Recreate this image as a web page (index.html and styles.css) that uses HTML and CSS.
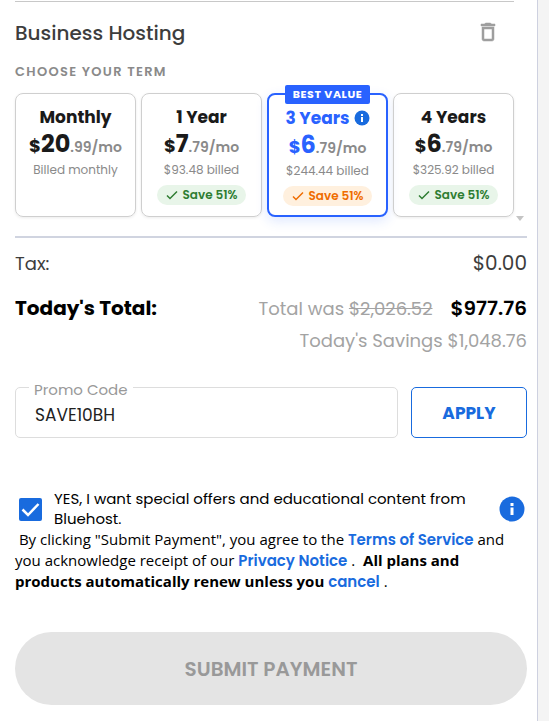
FILE: index.html
```html
<!DOCTYPE html>
<html lang="en">
<head>
    <meta charset="UTF-8">
    <meta name="viewport" content="width=device-width, initial-scale=1.0">
    <title>Checkout</title>
    <link rel="stylesheet" href="styles.css">
</head>
<body>
    <main class="panel">
        <section class="product">
            <div class="product-header">
                <h2>Business Hosting</h2>
                <button type="button" class="remove" aria-label="Remove">
                    <svg width="24" height="24" viewBox="0 0 24 24" fill="#9e9e9e" stroke="#9e9e9e" stroke-width="0.5"><path d="M6 19c0 1.100.9 2 2 2h8c1.100 0 2-.9 2-2V7H6v12zM8 9h8v10H8V9zm7.500-5-1-1h-5l-1 1H5v2h14V4z"/></svg>
                </button>
            </div>
            <fieldset class="terms">
                <legend>CHOOSE YOUR TERM</legend>
                <div class="term-list">
                    <label class="term">
                        <input type="radio" name="term" value="1">
                        <span class="term-name">Monthly</span>
                        <span class="price"><span class="currency">$</span><span class="amount">20</span>.99/mo</span>
                        <span class="billed">Billed monthly</span>
                    </label>
                    <label class="term">
                        <input type="radio" name="term" value="12">
                        <span class="term-name">1 Year</span>
                        <span class="price"><span class="currency">$</span><span class="amount">7</span>.79/mo</span>
                        <span class="billed">$93.48 billed</span>
                        <span class="save"><svg width="12" height="10" viewBox="0 0 12 10"><path d="M1 5.500 4 8.500 11 1.500"/></svg>Save 51%</span>
                    </label>
                    <label class="term selected">
                        <input type="radio" name="term" value="36" checked>
                        <span class="best-value">BEST VALUE</span>
                        <span class="term-name">3 Years
                            <svg width="16" height="16" viewBox="0 0 16 16"><circle cx="8" cy="8" r="7.500" fill="#196bde"/><path d="M7 4h2v2H7zM7 7h2v5H7z" fill="#fff"/></svg>
                        </span>
                        <span class="price"><span class="currency">$</span><span class="amount">6</span>.79/mo</span>
                        <span class="billed">$244.44 billed</span>
                        <span class="save"><svg width="12" height="10" viewBox="0 0 12 10"><path d="M1 5.500 4 8.500 11 1.500"/></svg>Save 51%</span>
                    </label>
                    <label class="term">
                        <input type="radio" name="term" value="48">
                        <span class="term-name">4 Years</span>
                        <span class="price"><span class="currency">$</span><span class="amount">6</span>.79/mo</span>
                        <span class="billed">$325.92 billed</span>
                        <span class="save"><svg width="12" height="10" viewBox="0 0 12 10"><path d="M1 5.500 4 8.500 11 1.500"/></svg>Save 51%</span>
                    </label>
                </div>
            </fieldset>
            <span class="scroll-arrow"></span>
        </section>

        <section class="totals">
            <div class="row tax"><span>Tax:</span><span>$0.00</span></div>
            <div class="row total">
                <strong>Today's Total:</strong>
                <span class="was">Total was <s>$2,026.52</s></span>
                <span class="due">$977.76</span>
            </div>
            <div class="savings">Today's Savings $1,048.76</div>
        </section>

        <form class="promo">
            <div class="promo-field">
                <label for="promo">Promo Code</label>
                <input type="text" id="promo" value="SAVE10BH">
            </div>
            <button type="button" class="apply">APPLY</button>
        </form>

        <div class="offers">
            <input type="checkbox" id="offers" checked>
            <label for="offers">YES, I want special offers and educational content from Bluehost.</label>
            <svg width="26" height="26" viewBox="0 0 26 26"><circle cx="13" cy="13" r="12.500" fill="#196bde"/><path d="M11.500 7h3v3h-3zM11.500 11.500h3V19h-3z" fill="#fff"/></svg>
        </div>
        <p class="legal">&nbsp;By clicking "Submit Payment", you agree to the <a href="#">Terms of Service</a> and you acknowledge receipt of our <a href="#">Privacy Notice</a> . &nbsp;<b>All plans and products automatically renew unless you</b> <a href="#">cancel</a> .</p>
        <button type="button" class="submit" disabled>SUBMIT PAYMENT</button>
    </main>
</body>
</html>
```
FILE: styles.css
```css
* {
    box-sizing: border-box;
}
body {
    margin: 0;
    background-color: #f4f4f4;
    font-family: Poppins, Inter, sans-serif;
    color: #3d3d3d;
}
button, input {
    font-family: inherit;
}
.panel {
    min-height: 100vh;
    margin-right: 11px;
    padding: 1px 10px 16px 15px;
    background-color: #fff;
    border-right: 1px solid #ced1e0;
}

/* product */
.product {
    position: relative;
    padding: 0 13px 19px 0;
    border-bottom: 2px solid #d0d4e0;
}
.product-header {
    display: flex;
    justify-content: space-between;
    align-items: center;
    height: 61px;
    padding-right: 14px;
    border-top: 1px solid #c8c8c8;
}
h2 {
    margin: 0;
    padding-top: 2px;
    font-size: 20px;
    font-weight: 500;
}
.remove {
    display: flex;
    padding: 0;
    border: 0;
    background: none;
    cursor: pointer;
}
.terms {
    margin: 0;
    padding: 0;
    border: 0;
    min-width: 0;
}
legend {
    padding: 0;
    margin-bottom: 11px;
    font-size: 13px;
    line-height: 20px;
    font-weight: 600;
    letter-spacing: 0.1em;
    color: #8a8a8a;
}
.term-list {
    display: grid;
    grid-template-columns: repeat(4, 1fr);
    gap: 5px;
}
.term {
    position: relative;
    display: flex;
    flex-direction: column;
    align-items: center;
    padding: 12px 0 9px;
    border: 1px solid #cfcfcf;
    border-radius: 8px;
    box-shadow: 0 1px 3px rgba(0, 0, 0, 0.08);
    white-space: nowrap;
    cursor: pointer;
}
.term input {
    position: absolute;
    opacity: 0;
}
.term-name {
    display: flex;
    align-items: center;
    gap: 4px;
    font-size: 17px;
    line-height: 22px;
    font-weight: 700;
    color: #1a1a1a;
}
.price {
    height: 32px;
    font-size: 14px;
    line-height: 32px;
    font-weight: 600;
    color: #8a8a8a;
}
.currency {
    font-size: 18px;
    font-weight: 700;
    color: #1a1a1a;
}
.amount {
    font-size: 24px;
    font-weight: 700;
    color: #1a1a1a;
}
.billed {
    font-size: 12px;
    line-height: 20px;
    color: #8a8a8a;
}
.save {
    display: flex;
    align-items: center;
    gap: 5px;
    margin-top: 5px;
    padding: 0 9px;
    border-radius: 10px;
    background-color: #e8f5e9;
    font-size: 12px;
    line-height: 20px;
    font-weight: 600;
    color: #2e7d32;
}
.save svg {
    fill: none;
    stroke: currentColor;
    stroke-width: 1.5;
}
.selected {
    border: 2px solid #2962ff;
    box-shadow: 0 4px 12px rgba(41, 98, 255, 0.15);
}
.selected .term-name, .selected .currency, .selected .amount {
    color: #2962ff;
}
.selected .save {
    background-color: #fff0de;
    color: #ef6c00;
}
.best-value {
    position: absolute;
    top: -10px;
    padding: 0 8px;
    border-radius: 2px;
    background-color: #2962ff;
    font-size: 11px;
    line-height: 19px;
    font-weight: 700;
    letter-spacing: 0.05em;
    color: #fff;
}
.scroll-arrow {
    position: absolute;
    right: 3px;
    bottom: 15px;
    border: 4px solid transparent;
    border-top: 5px solid #c4c4c4;
    border-bottom: 0;
}

/* totals */
.totals {
    padding-top: 10px;
}
.row {
    display: flex;
    align-items: center;
}
.tax {
    justify-content: space-between;
    height: 30px;
    font-size: 18px;
}
.tax span:last-child {
    font-size: 20px;
}
.total {
    height: 60px;
    font-size: 20px;
    color: #000;
}
.due {
    font-weight: 600;
}
.was {
    margin-left: auto;
    margin-right: 18px;
    font-size: 18px;
    color: #a3a3a3;
}
.savings {
    line-height: 24px;
    margin-top: -9px;
    text-align: right;
    font-size: 18px;
    color: #a3a3a3;
}

/* promo code */
.promo {
    display: flex;
    gap: 13px;
    margin-top: 34px;
}
.promo-field {
    position: relative;
    flex: 1;
}
.promo-field label {
    position: absolute;
    top: -7px;
    left: 14px;
    padding: 0 5px;
    background-color: #fff;
    font-size: 15px;
    line-height: 20px;
    color: #999;
}
.promo-field input {
    display: block;
    width: 100%;
    height: 51px;
    padding: 5px 19px 0;
    border: 1px solid #ddd;
    border-radius: 5px;
    font-size: 17px;
    color: #222;
}
.apply {
    width: 116px;
    border: 1px solid #196bde;
    border-radius: 5px;
    background-color: #fff;
    font-size: 17px;
    font-weight: 700;
    color: #196bde;
}

/* agreement */
.offers {
    display: flex;
    align-items: center;
    padding: 0 2px 0 4px;
    margin-top: 51px;
    font-size: 15px;
    line-height: 20px;
    color: #000;
}
.offers input {
    appearance: none;
    flex: none;
    width: 23px;
    height: 23px;
    margin: 0 12px 0 0;
    border-radius: 2px;
    background: #196bde url("data:image/svg+xml,%3Csvg xmlns='http://www.w3.org/2000/svg' viewBox='0 0 23 23'%3E%3Cpath d='M3.500 11.500 9 17 19.500 6' fill='none' stroke='%23fff' stroke-width='2.500'/%3E%3C/svg%3E");
}
.offers label {
    flex: 1;
    padding-right: 20px;
}
.offers svg {
    flex: none;
}
.legal {
    margin: 0 0 40px;
    font-family: "Open Sans", sans-serif;
    font-size: 15px;
    line-height: 21px;
    color: #000;
}
.legal a {
    font-family: Poppins, Inter, sans-serif;
    font-weight: 600;
    color: #196bde;
    text-decoration: none;
}
.submit {
    display: block;
    width: 100%;
    height: 73px;
    border: 0;
    border-radius: 37px;
    background-color: #e4e4e4;
    font-size: 20px;
    font-weight: 600;
    color: #999;
}
```
